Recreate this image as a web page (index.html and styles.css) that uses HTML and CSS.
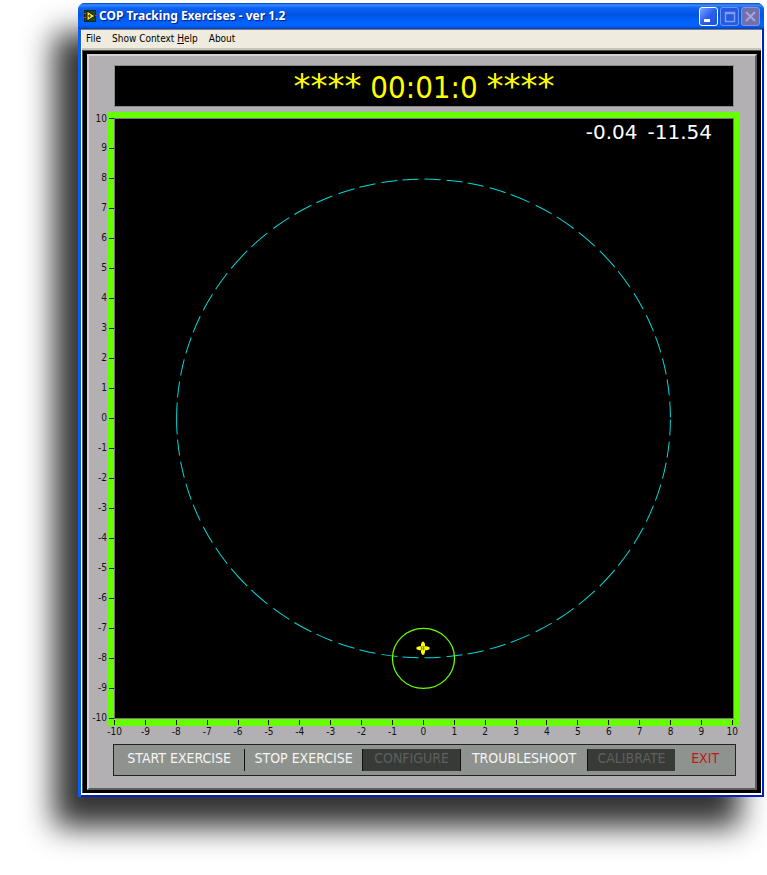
FILE: index.html
```html
<!DOCTYPE html>
<html lang="en">
<head>
<meta charset="utf-8">
<title>COP Tracking Exercises - ver 1.2</title>
<link rel="stylesheet" href="styles.css">
</head>
<body>
<main class="window">
  <header class="titlebar">
    <svg class="app-icon" viewBox="0 0 14 14" aria-hidden="true">
      <rect x="1" y="1" width="12" height="12" fill="#1d4a2a"/>
      <rect x="1.500" y="1.500" width="11" height="11" fill="none" stroke="#0a0a0a" stroke-dasharray="1 1"/>
      <path d="M0 4.500H4M0 8.500H4M10 6.500H14" stroke="#c8372c"/>
      <path d="M4 2L12 7L4 12Z" fill="#f5ea1c" stroke="#111"/>
      <path d="M5 7H8M6.500 5.500V8.500" stroke="#333"/>
    </svg>
    <h1 class="title">COP Tracking Exercises - ver 1.2</h1>
    <div class="caption-buttons">
      <button class="caption" aria-label="Minimize"><svg viewBox="0 0 17 17"><path d="M4 12.500H10" stroke="#fff" stroke-width="3"/></svg></button>
      <button class="caption caption-off" aria-label="Maximize" disabled><svg viewBox="0 0 17 17"><path d="M4.500 4.500H13.500V13.500H4.500ZM4 5.500H14" fill="none" stroke="#7d9df0" stroke-width="1.500"/></svg></button>
      <button class="caption caption-close" aria-label="Close" disabled><svg viewBox="0 0 17 17"><path d="M4 4L13 13M13 4L4 13" stroke="#aaa5d8" stroke-width="2"/></svg></button>
    </div>
  </header>
  <div class="client">
    <nav class="menubar">
      <button class="menu">File</button>
      <button class="menu">Show Context <u>H</u>elp</button>
      <button class="menu">About</button>
    </nav>
    <div class="frame">
      <div class="panel">
        <div class="timer"><span class="stars">****</span> 00:01:0 <span class="stars">****</span></div>
        <section class="plot">
          <div class="bezel"></div>
          <div class="y-axis" id="y-axis"></div>
          <div class="screen">
            <svg class="trace" viewBox="0 0 619 600" role="img" aria-label="Centre of pressure position on the target path">
              <path id="track" class="track"/>
              <ellipse class="target" cx="309" cy="539.500" rx="31" ry="30"/>
              <g transform="translate(308.500 529.500)">
                <path fill="#ffff00" d="M-1 -6.500H1L2 -4V-2H4L6.500 -1V1L4 2H2V4L1 6.500H-1L-2 4V2H-4L-6.500 1V-1L-4 -2H-2V-4Z"/>
                <path d="M-2 -1.500H2M-2 .5H2M-1.500 -2V2M.5 -2V2" stroke="#6a6200" stroke-width=".6"/>
              </g>
            </svg>
            <output class="readout"><span>-0.04</span> <span>-11.54</span></output>
          </div>
          <div class="x-axis" id="x-axis"></div>
        </section>
        <div class="toolbar">
          <button class="tool start">START EXERCISE</button>
          <button class="tool stop">STOP EXERCISE</button>
          <button class="tool configure" disabled>CONFIGURE</button>
          <button class="tool trouble">TROUBLESHOOT</button>
          <button class="tool calibrate" disabled>CALIBRATE</button>
          <button class="tool exit">EXIT</button>
        </div>
      </div>
    </div>
  </div>
</main>
<script src="plot.js"></script>
</body>
</html>
```
FILE: plot.js
```js
// Axis scales run from -10 to 10 on both sides.
function fillAxis(id, values) {
  document.getElementById(id).innerHTML = values
    .map(v => `<span class="mark"><span class="num">${v}</span></span>`)
    .join('');
}
const scale = Array.from({ length: 21 }, (_, i) => i - 10);
fillAxis('x-axis', scale);
fillAxis('y-axis', [...scale].reverse());

// The target path: an ellipse drawn as dashes, mirrored about the x axis.
const CX = 309, CY = 300, RX = 246.5, RY = 239;
const byX = [
  [288, 304], [267, 283], [245, 261], [224, 240], [202, 218], [180, 197],
  [159, 175], [137, 153], [117, 133],
  [310, 326], [332, 348], [353, 369], [375, 391], [396, 415], [421, 437],
  [442, 459], [464, 480], [485, 500]
];
const byY = [
  [-1, 155, 171], [-1, 176, 192], [-1, 198, 214], [-1, 219, 235],
  [-1, 241, 257], [-1, 263, 279], [-1, 284, 300],
  [1, 153, 169], [1, 175, 191], [1, 197, 213], [1, 218, 234],
  [1, 240, 256], [1, 261, 277], [1, 283, 299]
];
const dashes = [];
const arc = (x1, y1, x2, y2) => {
  dashes.push(`M${x1} ${y1}A${RX} ${RY} 0 0 1 ${x2} ${y2}`);
  dashes.push(`M${x1} ${2 * CY - y1}A${RX} ${RY} 0 0 0 ${x2} ${2 * CY - y2}`);
};
const yAt = x => CY - RY * Math.sqrt(1 - ((x - CX) / RX) ** 2);
const xAt = (side, y) => CX + side * RX * Math.sqrt(1 - ((y - CY) / RY) ** 2);
byX.forEach(([a, b]) => arc(a, yAt(a), b, yAt(b)));
byY.forEach(([s, a, b]) => {
  const [from, to] = s < 0 ? [b, a] : [a, b];
  arc(xAt(s, from), from, xAt(s, to), to);
});
document.getElementById('track').setAttribute('d', dashes.join(''));
```
FILE: styles.css
```css
* { box-sizing: border-box; }
body {
  margin: 0;
  padding: 3px 3px 77px 78px;
  background: #fff;
  font-family: "DejaVu Sans Condensed", "DejaVu Sans", sans-serif;
}
button { font: inherit; color: inherit; border: 0; background: none; padding: 0; margin: 0; }

.window {
  background: linear-gradient(90deg, #0a5cf8 3px, #0020c0 3px);
  border-radius: 7px 7px 0 0;
  padding-bottom: 2px;
  box-shadow: -24px 30px 30px #333;
}
.titlebar {
  display: flex;
  align-items: center;
  height: 26px;
  padding: 0 4px 0 5px;
  border-radius: 7px 7px 0 0;
  background: linear-gradient(#0a3fc0 0, #3a8dff 2px, #0a62f5 5px, #0054e3 12px, #0064ff 20px, #0060fa 23px, #003fc8 26px);
}
.app-icon { width: 14px; height: 14px; margin-right: 2px; }
.title {
  flex: 1;
  margin: 0;
  color: #fff;
  font: bold 12px/28px "Noto Sans", sans-serif;
  text-shadow: 1px 1px 1px #0a1883;
  white-space: nowrap;
}
.caption-buttons { display: flex; gap: 2px; }
.caption {
  width: 19px;
  height: 19px;
  border: 1px solid #fff;
  border-radius: 3px;
  background: linear-gradient(135deg, #7fa6ff, #2a5ff0 50%, #1d4fd8);
}
.caption svg { display: block; width: 17px; height: 17px; }
.caption-off { border-color: #6d93f0; background: #2459e2; }
.caption-close { border-color: #8f8fd8; background: #716fae; }

.client {
  margin: 0 2px 0 3px;
  padding: 0 1px 2px;
  background: #fff;
  border-top: 1px solid #7d7a70;
}
.menubar {
  display: flex;
  gap: 11px;
  height: 20px;
  padding: 0 4px;
  background: #efebde;
  border-bottom: 2px solid #c9c5b8;
}
.menu { font-size: 10px; line-height: 18px; color: #000; }
.frame {
  background: #000;
  border: 1px solid #55534f;
  border-width: 1px 0 0 1px;
  padding: 3px 4px 3px 4px;
}
.panel {
  padding: 9px 21px 12px 5px;
  background: #b3b0b3;
  border: 2px solid;
  border-color: #d4d2d4 #5e5c5e #5e5c5e #d4d2d4;
}
.timer {
  margin-left: 20px;
  height: 42px;
  border: 1px solid #8c8a8c;
  background: #000;
  color: #ffff00;
  font-size: 31px;
  line-height: 40px;
  text-align: center;
  white-space: pre;
}
.stars { font-family: "DejaVu Sans", sans-serif; font-size: 34px; }

.plot {
  display: grid;
  grid-template-columns: 14px 6px minmax(0, 1fr);
  grid-template-rows: 6px auto 7px 13px;
  margin-top: 5px;
}
.bezel { grid-area: 1 / 2 / 4 / 4; margin-right: -6px; background: #66ff00; }
.screen { grid-area: 2 / 3; position: relative; background: #000; outline: 1px solid #7a6f7a; outline-offset: -1px; }
.trace { display: block; width: 100%; height: auto; }
.track { fill: none; stroke: #00d8d8; stroke-width: 1; }
.target { fill: none; stroke: #66ff00; stroke-width: 1.3; }
.readout {
  position: absolute;
  top: 2px;
  right: 22px;
  display: flex;
  gap: 10px;
  color: #fff;
  font: 20px/24px "DejaVu Sans", sans-serif;
}
.y-axis, .x-axis { display: flex; justify-content: space-between; color: #111; font-size: 10px; }
.y-axis { grid-area: 2 / 1 / 3 / 3; flex-direction: column; z-index: 1; }
.x-axis { grid-area: 3 / 3 / 5 / 4; z-index: 1; margin-right: 1px; }
.mark { display: flex; align-items: center; }
.y-axis .mark { height: 1px; justify-content: flex-end; gap: 2px; }
.y-axis .mark::after { content: ""; flex: none; width: 5px; height: 1px; background: #111; }
.x-axis .mark { width: 1px; flex-direction: column; }
.x-axis .mark::before { content: ""; flex: none; width: 1px; height: 5px; margin-top: 1px; background: #111; }
.num { line-height: 14px; white-space: nowrap; }

.toolbar {
  display: flex;
  align-items: center;
  margin: 5px -2px 0 19px;
  height: 32px;
  border: 1px solid #202420;
  background: #8f938f;
  color: #f4f4f4;
  font: 14px/18px "DejaVu Sans Condensed", sans-serif;
  font-weight: 200;
}
.tool { height: 22px; padding-bottom: 3px; white-space: nowrap; text-align: center; border-left: 1px solid #111; }
.start { flex: 131 1 0; border: 0; }
.stop { flex: 117 1 0; }
.configure { flex: 98 1 0; }
.trouble { flex: 126 1 0; }
.calibrate { flex: 88 1 0; }
.configure, .calibrate { background: #373a37; color: #5d605d; }
.exit { flex: 60 1 0; border: 0; color: #c01818; }
```
